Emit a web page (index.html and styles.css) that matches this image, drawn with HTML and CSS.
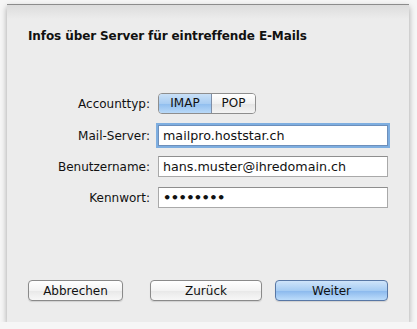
FILE: index.html
```html
<!DOCTYPE html>
<html lang="de">
<head>
  <meta charset="UTF-8">
  <title>Infos über Server für eintreffende E-Mails</title>
  <link rel="stylesheet" href="styles.css">
</head>
<body>
  <div class="sheet">
    <h1 class="title">Infos über Server für eintreffende E-Mails</h1>

    <div class="fields">
      <label class="label">Accounttyp:</label>
      <div class="segmented">
        <span class="segment active">IMAP</span>
        <span class="segment">POP</span>
      </div>

      <label class="label">Mail-Server:</label>
      <div class="input focused">mailpro.hoststar.ch</div>

      <label class="label">Benutzername:</label>
      <div class="input">hans.muster@ihredomain.ch</div>

      <label class="label">Kennwort:</label>
      <div class="input password">&#8226;&#8226;&#8226;&#8226;&#8226;&#8226;&#8226;&#8226;</div>
    </div>

    <div class="buttons">
      <button class="btn cancel">Abbrechen</button>
      <button class="btn back">Zurück</button>
      <button class="btn primary">Weiter</button>
    </div>
  </div>
</body>
</html>
```

FILE: styles.css
```css
:root {
  --panel: #ececec;
  --text: #111111;
  --field-border: #a9a9a9;
  --focus: #7eaee0;
  --shadow: 0 3px 6px rgba(0, 0, 0, 0.35);
}

* {
  margin: 0;
  padding: 0;
  box-sizing: border-box;
}

body {
  font-family: 'DejaVu Sans', 'Liberation Sans', sans-serif;
  background: #f6f6f6;
  color: var(--text);
  padding: 4px 8px 0 7px;
}

.sheet {
  width: 402px;
  height: 318px;
  background: linear-gradient(#dcdcdc 0, #ececec 14px, #ececec 100%);
  border-top: 1px solid #8c8c8c;
  box-shadow: var(--shadow);
  padding: 22px 21px 0 21px;
  display: flex;
  flex-direction: column;
}

.title {
  font-size: 12px;
  font-weight: bold;
  line-height: 18px;
  letter-spacing: -0.1px;
}

.fields {
  margin-top: 48px;
  display: grid;
  grid-template-columns: 122px 230px;
  column-gap: 8px;
  row-gap: 10px;
  align-items: center;
}

.label {
  font-size: 12px;
  text-align: right;
}

.segmented {
  display: flex;
  width: 98px;
  height: 21px;
  border: 1px solid #8e8e8e;
  border-radius: 4px;
  overflow: hidden;
  margin-bottom: 1px;
}

.segment {
  flex: 1;
  font-size: 12px;
  line-height: 19px;
  text-align: center;
  background: linear-gradient(#ffffff, #f1f1f1 50%, #e4e4e4 51%, #f4f4f4);
}

.segment.active {
  flex: 0 0 53px;
  border-right: 1px solid #7f8ea6;
  background: linear-gradient(#c9e0f7, #a9cdf2 50%, #8fbdee 51%, #b9d9f8);
}

.input {
  height: 21px;
  background: #ffffff;
  border: 1px solid var(--field-border);
  border-top-color: #8e8e8e;
  font-size: 12.7px;
  line-height: 19px;
  padding-left: 4px;
}

.input.focused {
  box-shadow: 0 0 0 2px var(--focus);
  border-color: #6d8fbb;
}

.input.password {
  font-size: 13px;
  font-weight: bold;
  letter-spacing: -0.6px;
}

.buttons {
  margin-top: auto;
  margin-bottom: 21px;
  display: flex;
  align-items: center;
}

.btn {
  font-family: 'DejaVu Sans', 'Liberation Sans', sans-serif;
  font-size: 12px;
  height: 21px;
  border: 1px solid #8a8a8a;
  border-radius: 4px;
  color: var(--text);
  background: linear-gradient(#ffffff, #f3f3f3 50%, #e8e8e8 51%, #f7f7f7);
  box-shadow: 0 1px 1px rgba(0, 0, 0, 0.12);
}

.cancel {
  width: 95px;
}

.back {
  width: 112px;
  margin-left: 27px;
}

.primary {
  width: 113px;
  margin-left: 13px;
  border-color: #5877a5;
  background: linear-gradient(#cfe4fa, #a6ccf3 50%, #8ab8ed 51%, #bcdcfb);
}
```
